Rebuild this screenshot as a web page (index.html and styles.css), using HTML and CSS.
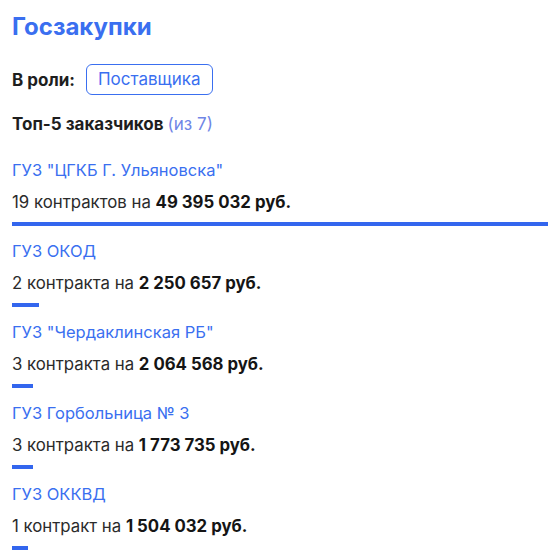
FILE: index.html
```html
<!DOCTYPE html>
<html lang="ru">
<head>
    <meta charset="UTF-8">
    <meta name="viewport" content="width=device-width, initial-scale=1.0">
    <title>Госзакупки</title>
    <link rel="stylesheet" href="styles.css">
</head>
<body>
    <main class="panel">
        <h1 class="title">Госзакупки</h1>

        <div class="role">
            <span class="role-label">В роли:</span>
            <span class="role-tag">Поставщика</span>
        </div>

        <h2 class="subtitle">Топ-5 заказчиков <span class="subtitle-count">(из 7)</span></h2>

        <ul class="customers">
            <li class="customer">
                <a class="customer-name" href="#">ГУЗ "ЦГКБ Г. Ульяновска"</a>
                <div class="customer-sum">19 контрактов на <b>49 395 032 руб.</b></div>
                <div class="customer-bar" style="width: 100%"></div>
            </li>
            <li class="customer">
                <a class="customer-name" href="#">ГУЗ ОКОД</a>
                <div class="customer-sum">2 контракта на <b>2 250 657 руб.</b></div>
                <div class="customer-bar" style="width: 27px"></div>
            </li>
            <li class="customer">
                <a class="customer-name" href="#">ГУЗ "Чердаклинская РБ"</a>
                <div class="customer-sum">3 контракта на <b>2 064 568 руб.</b></div>
                <div class="customer-bar" style="width: 21px"></div>
            </li>
            <li class="customer">
                <a class="customer-name" href="#">ГУЗ Горбольница № 3</a>
                <div class="customer-sum">3 контракта на <b>1 773 735 руб.</b></div>
                <div class="customer-bar" style="width: 21px"></div>
            </li>
            <li class="customer">
                <a class="customer-name" href="#">ГУЗ ОККВД</a>
                <div class="customer-sum">1 контракт на <b>1 504 032 руб.</b></div>
                <div class="customer-bar" style="width: 16px"></div>
            </li>
        </ul>
    </main>
</body>
</html>
```

FILE: styles.css
```css
body {
    margin: 0;
    padding: 0;
    background-color: #ffffff;
    font-family: Inter, "Noto Sans", sans-serif;
    color: #2b2b2b;
}
.panel {
    padding: 11px 7px 0 12px;
}
.title {
    margin: 0;
    font-size: 24px;
    line-height: 32px;
    font-weight: 700;
    color: #3a6ff0;
}
.role {
    display: flex;
    align-items: center;
    gap: 11px;
    margin-top: 21px;
}
.role-label {
    font-size: 17px;
    font-weight: 700;
    color: #1e1e1e;
}
.role-tag {
    padding: 0 11px;
    height: 29px;
    line-height: 29px;
    border: 1px solid #3a6ff0;
    border-radius: 6px;
    font-size: 17px;
    color: #3a6ff0;
}
.subtitle {
    margin: 17px 0 0;
    font-size: 17px;
    line-height: 24px;
    font-weight: 700;
    color: #1e1e1e;
}
.subtitle-count {
    font-weight: 400;
    color: #7086e6;
}
.customers {
    list-style: none;
    margin: 22px 0 0;
    padding: 0;
}
.customer {
    padding-bottom: 13px;
}
.customer-name {
    display: block;
    font-size: 16.5px;
    line-height: 24px;
    color: #3a6ff0;
    text-decoration: none;
}
.customer-sum {
    margin-top: 8px;
    font-size: 16.8px;
    line-height: 24px;
}
.customer-sum b {
    font-weight: 700;
    color: #151515;
}
.customer-bar {
    height: 4px;
    margin-top: 8px;
    background-color: #3366ee;
}
```
